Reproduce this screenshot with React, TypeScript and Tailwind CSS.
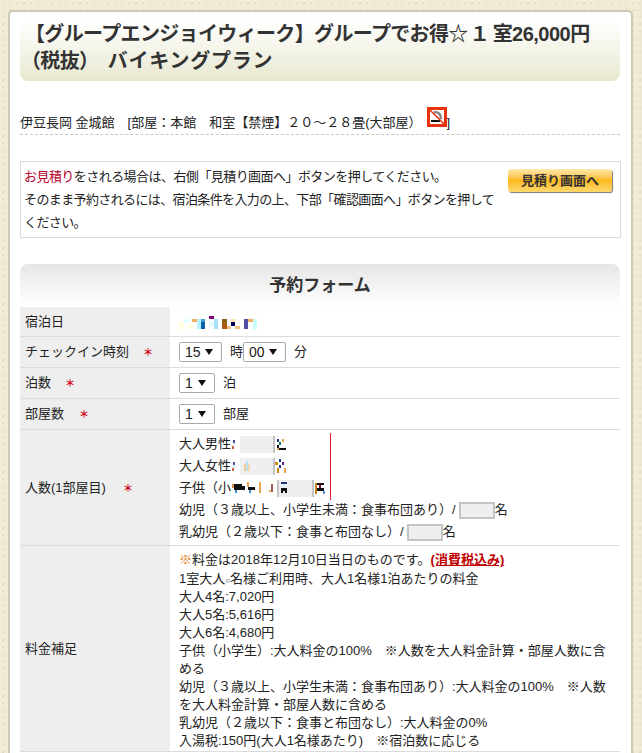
const font = { fontFamily: '"Liberation Sans", "Noto Sans CJK JP", sans-serif' };

type R = [number, number, number, number, string];

function Sel({ v, w }: { v: string; w: string }) {
  return (
    <span className={`inline-flex items-center justify-between h-[20px] pl-[5px] pr-[8px] border border-[#a9a9a9] rounded-[2px] bg-white text-[14px] text-[#222] ${w}`}>
      <span>{v}</span>
      <svg width="8" height="6" viewBox="0 0 8 6"><path d="M0 0h8L4 6z" fill="#111" /></svg>
    </span>
  );
}

function Noise({ rects, w, h, className = "" }: { rects: R[]; w: number; h: number; className?: string }) {
  return (
    <svg width={w} height={h} className={`block shrink-0 ${className}`} shapeRendering="crispEdges">
      {rects.map(([x, y, a, b, c], i) => <rect key={i} x={x} y={y} width={a} height={b} fill={c} />)}
    </svg>
  );
}

function Box({ w, className = "", children }: { w: string; className?: string; children?: React.ReactNode }) {
  return <span className={`flex items-center h-[17px] bg-[#efefef] border-2 border-[#c4c4c4] overflow-hidden ${w} ${className}`}>{children}</span>;
}

function Req({ ml }: { ml: string }) {
  return <span className={`text-[#d0021b] text-[10px] font-bold ${ml}`}>＊</span>;
}

function Row({ label, children, h }: { label: React.ReactNode; children: React.ReactNode; h: string }) {
  return (
    <div className={`flex border-b border-[#dcdcdc] ${h}`}>
      <div className="w-[150px] shrink-0 bg-[#eeeeee] flex items-center pl-[5px] text-[13px] text-[#222]">{label}</div>
      <div className="flex-1 pl-[9px] flex items-center text-[13px] text-[#222]">{children}</div>
    </div>
  );
}

const dateNoise: R[] = [
  [0, 7, 5, 7, "#ffffe0"], [5, 4, 5, 3, "#e0ffff"], [9, 9, 5, 5, "#ffffe0"], [13, 4, 5, 3, "#f0b060"],
  [18, 4, 4, 10, "#b8f0ff"], [22, 4, 4, 3, "#40a0d0"], [22, 7, 4, 7, "#0e5ea8"], [30, 1, 5, 3, "#800080"],
  [30, 7, 5, 4, "#e0ffff"], [35, 4, 4, 10, "#a8e0ff"], [43, 4, 5, 3, "#806010"], [43, 7, 5, 7, "#a85a10"],
  [48, 11, 4, 3, "#f0c080"], [52, 4, 4, 3, "#fde0b0"], [52, 7, 4, 4, "#000060"], [56, 11, 5, 3, "#f0c080"],
  [65, 4, 4, 10, "#5050a8"], [69, 4, 5, 3, "#f0b060"], [74, 4, 4, 10, "#c8ffff"],
];
const colon: R[] = [[1, 0, 2, 3, "#5050a0"], [1, 3, 2, 3, "#d8f0f8"], [0, 6, 2, 3, "#c06040"]];

export default function App() {
  return (
    <div className="w-[642px] h-[753px] overflow-hidden bg-[#f0ebd5] bg-[radial-gradient(#e0d9bd_1px,transparent_1px)] bg-[length:7px_7px] pt-[10px] pl-[8px]" style={font}>
      <div className="bg-white rounded-[5px] border-[2px] border-[#cfcab6] w-[625px] h-[800px] px-[10px] pt-[9px]">
        <h1 className="h-[60px] w-[600px] pl-[1px] text-[20px] leading-[27px] font-bold text-[#333] tracking-[-0.65px] whitespace-nowrap rounded-b-[8px] bg-gradient-to-b from-white to-[#e8e8d0]">
          <span className="ml-[4px]">【グループエンジョイウィーク】グループでお得☆<span className="ml-[2px] tracking-[3px]">１</span>室<span className="tracking-[-0.5px]">26,000</span>円</span><br />
          （税抜）　<span className="tracking-[0.75px]">バイキングプラン</span>
        </h1>
        <div className="w-[600px] mt-[26px] h-[28px] border-b border-dashed border-[#c8c8c8] flex items-end pb-[2px] text-[13px] text-[#222] whitespace-pre">
          <span>伊豆長岡 金城館　[部屋：本館　和室【禁煙】２０～２８畳(大部屋）</span>
          <svg width="20" height="20" viewBox="0 0 20 20" className="ml-[5px] mb-[5px]">
            <rect x="1.5" y="1.5" width="17" height="17" fill="white" stroke="#e8330f" strokeWidth="3" />
            <rect x="4" y="13" width="9" height="2" fill="#111" />
            <path d="M7 5c4 0 7 2 7 7" stroke="#888" strokeWidth="2.5" fill="none" />
            <path d="M3 3l14 14" stroke="#e8330f" strokeWidth="1.6" />
          </svg>
          <span>]</span>
        </div>
        <div className="w-[601px] h-[77px] mt-[26px] border border-[#dcdcdc] flex pl-[3px] text-[13px] leading-[23px] text-[#222]">
          <p className="w-[484px] pr-[9px] pt-[3px]">
            <span className="tracking-[-0.55px]"><span className="text-[#b5002b]">お見積り</span>をされる場合は、右側「見積り画面へ」ボタンを押してください。</span><br />
            <span className="tracking-[-0.62px]">そのまま予約されるには、宿泊条件を入力の上、下部「確認画面へ」ボタンを押してください。</span>
          </p>
          <div className="mt-[7px] w-[104px] h-[23px] rounded-[3px] flex items-center justify-center text-[13px] font-bold text-[#333] bg-gradient-to-b from-[#fde9a8] via-[#fdb913] to-[#fcd86a] shadow-[1px_1px_1px_#777]">見積り画面へ</div>
        </div>
        <div className="w-[600px] mt-[26px] h-[43px] rounded-t-[8px] bg-gradient-to-b from-[#e6e6e6] to-white flex items-center justify-center text-[17px] font-bold text-[#333]">予約フォーム</div>
        <div className="w-[600px]">
          <Row label="宿泊日" h="h-[30px]">
            <Noise w={80} h={14} rects={dateNoise} />
          </Row>
          <Row label={<span>チェックイン時刻<Req ml="ml-[14px]" /></span>} h="h-[31px]">
            <Sel v="15" w="w-[43px]" /><span className="ml-[8px]">時</span><Sel v="00" w="w-[43px]" /><span className="ml-[8px]">分</span>
          </Row>
          <Row label={<span>泊数<Req ml="ml-[14px]" /></span>} h="h-[31px]">
            <Sel v="1" w="w-[36px]" /><span className="ml-[8px]">泊</span>
          </Row>
          <Row label={<span>部屋数<Req ml="ml-[15px]" /></span>} h="h-[31px]">
            <Sel v="1" w="w-[36px]" /><span className="ml-[8px]">部屋</span>
          </Row>
          <Row label={<span>人数(1部屋目)<Req ml="ml-[17px]" /></span>} h="h-[116px]">
            <div className="relative w-full h-full pt-[3px] leading-[22px]">
              <div className="flex items-center h-[22px]">
                大人男性<Noise w={3} h={9} rects={colon} className="ml-[1px]" />
                <Box w="w-[35px]" className="ml-[5px] border-l-0 border-y-0" />
                <Noise w={10} h={11} className="ml-[2px]" rects={[[0, 0, 2, 3, "#203080"], [5, 0, 2, 3, "#e8a850"], [2, 3, 2, 3, "#107060"], [0, 6, 2, 3, "#111"], [2, 9, 7, 2, "#111"], [0, 9, 2, 2, "#e0a040"]]} />
              </div>
              <div className="flex items-center h-[22px]">
                大人女性<Noise w={3} h={9} rects={colon} className="ml-[1px]" />
                <Box w="w-[35px]" className="ml-[5px] border-l-0 border-y-0">
                  <Noise w={10} h={10} className="ml-[4px]" rects={[[0, 3, 2, 7, "#f0c890"], [2, 0, 2, 10, "#b8e0f0"], [4, 3, 2, 7, "#f4d8b0"]]} />
                </Box>
                <Noise w={12} h={14} rects={[[0, 3, 3, 3, "#d08a10"], [4, 0, 2, 3, "#203080"], [7, 3, 2, 3, "#602090"], [4, 6, 2, 3, "#203080"], [2, 9, 2, 5, "#d08a10"], [9, 9, 2, 5, "#e8a850"]]} />
              </div>
              <div className="flex items-center h-[22px]">
                子供（小
                <Noise w={46} h={12} rects={[[1, 2, 4, 4, "#d09040"], [3, 2, 8, 6, "#111"], [11, 4, 3, 4, "#111"], [4, 8, 2, 3, "#4090d0"], [16, 0, 2, 5, "#e8a850"], [17, 5, 7, 3, "#111"], [18, 8, 2, 3, "#4090d0"], [28, 0, 2, 11, "#e8a850"], [40, 2, 2, 8, "#a06050"], [38, 8, 2, 2, "#f0b060"]]} />
                <Box w="w-[37px]" className="border-y-0">
                  <Noise w={8} h={12} className="ml-[2px]" rects={[[0, 0, 6, 2, "#203080"], [2, 2, 2, 3, "#d8f0f8"], [0, 6, 6, 3, "#111"], [0, 9, 2, 2, "#111"], [4, 9, 2, 2, "#111"]]} />
                </Box>
                <Noise w={12} h={11} rects={[[1, 0, 2, 11, "#c08020"], [3, 0, 7, 2, "#111"], [5, 2, 2, 3, "#800040"], [3, 5, 7, 3, "#111"], [9, 8, 2, 3, "#5090d0"]]} />
              </div>
              <div className="flex items-center h-[22px]">幼児（３歳以上、小学生未満：食事布団あり）/<Box w="w-[36px]" className="ml-[3px]" />名</div>
              <div className="flex items-center h-[22px]">乳幼児（２歳以下：食事と布団なし）/<Box w="w-[36px]" className="ml-[3px]" />名</div>
              <div className="absolute left-[151px] top-[3px] w-px h-[67px] bg-[#e0192d]" />
            </div>
          </Row>
          <Row label="料金補足" h="h-[206px]">
            <div className="leading-[18.1px] pr-[8px] pt-[5px]">
              <span className="text-[#e0780f]">※</span>料金は2018年12月10日当日のものです。<span className="text-[#c00000] font-bold underline">(消費税込み)</span><br />
              1室大人<span className="text-[8px] leading-none">○</span>名様ご利用時、大人1名様1泊あたりの料金<br />
              大人4名:7,020円<br />大人5名:5,616円<br />大人6名:4,680円<br />
              子供（小学生）:大人料金の100%　※人数を大人料金計算・部屋人数に含める<br />
              幼児（３歳以上、小学生未満：食事布団あり）:大人料金の100%　※人数を大人料金計算・部屋人数に含める<br />
              乳幼児（２歳以下：食事と布団なし）:大人料金の0%<br />
              入湯税:150円(大人1名様あたり)　※宿泊数に応じる
            </div>
          </Row>
        </div>
      </div>
    </div>
  );
}
